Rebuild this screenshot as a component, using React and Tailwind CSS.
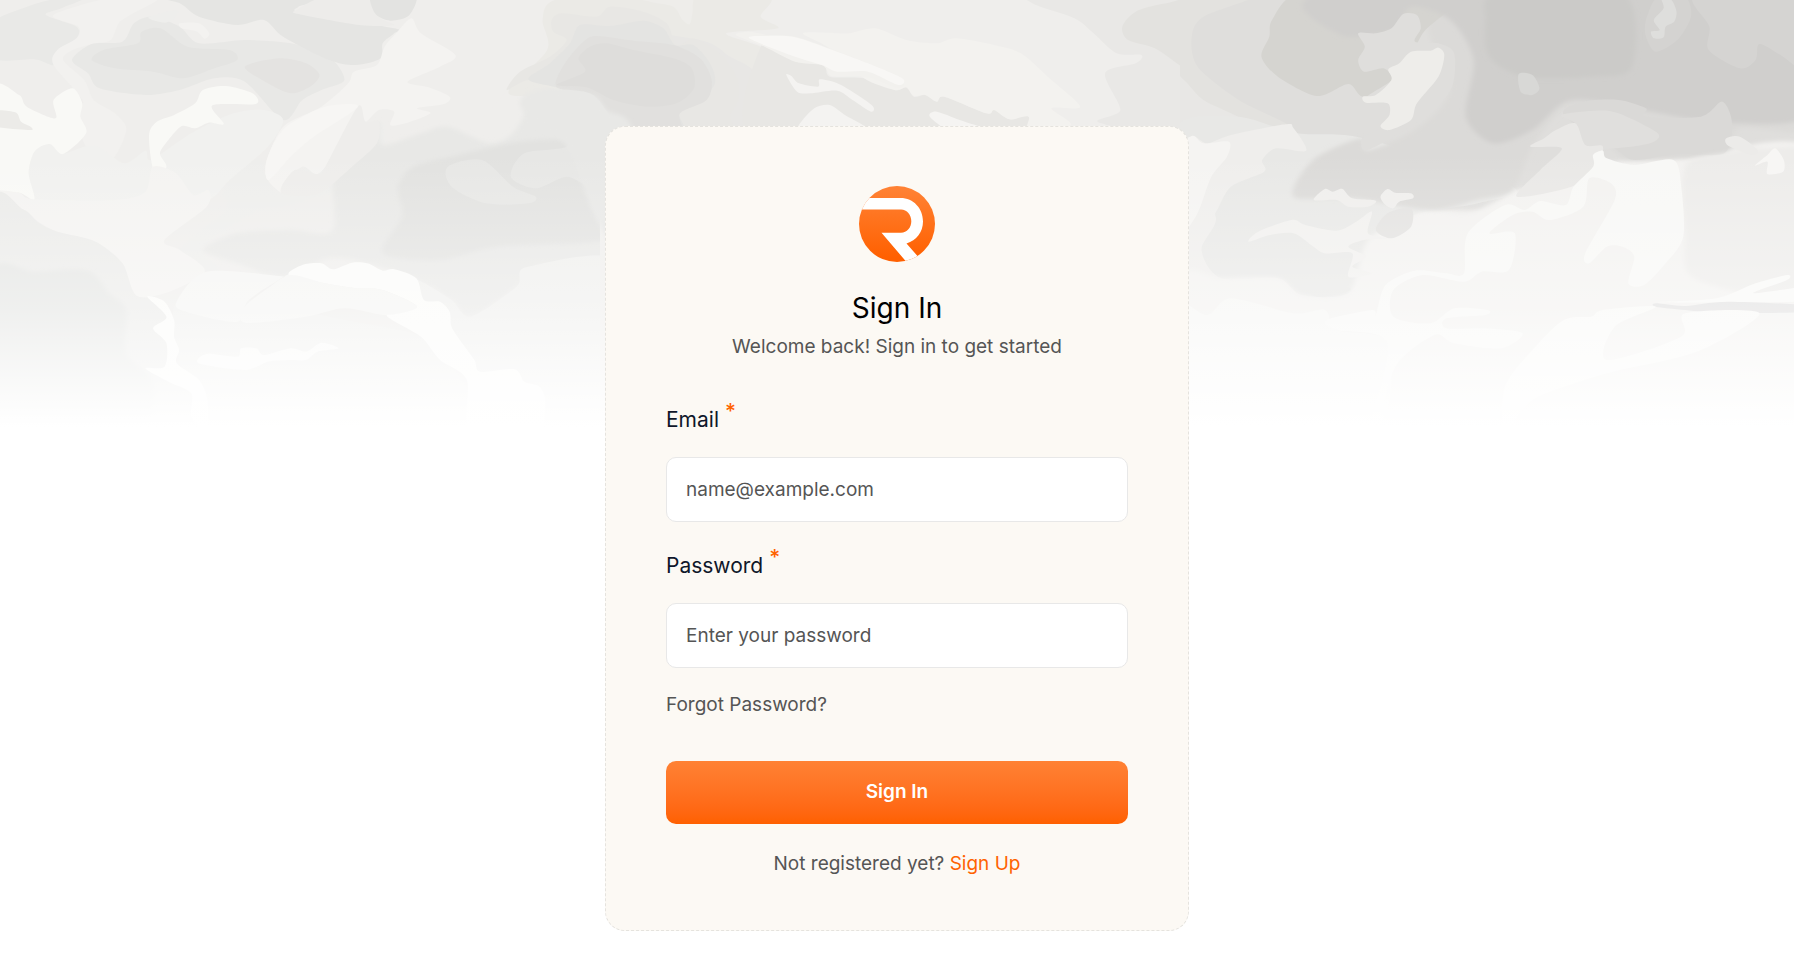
const FONT = "font-['Inter','Liberation_Sans',sans-serif]";

// Each cloud is [colour, outline points, soft edge?]
const WEST = [
  ['#e9e9e7', '-20,70 60,25 130,0 250,-20 160,25 120,45 200,80 200,115 150,150 140,195 90,178 -20,175'],
  ['#f2f1ef', '140,45 300,-10 420,-10 340,45 310,70 290,120 250,130 190,150 165,180 220,240 245,300 300,340 330,390 290,480 225,440 205,350 215,300 140,195 150,150 200,115 205,80'],
  ['#e8e8e6', '188,180 240,132 320,125 350,70 400,50 470,80 520,130 640,120 760,130 860,170 900,240 840,270 790,300 740,360 640,245 560,235 470,270 380,285 260,265 230,220'],
  ['#e4e4e2', '240,180 270,150 360,130 370,95 420,85 490,140 600,150 620,180 560,205 480,235 400,215 300,205'],
  ['#e4e3e1', '640,200 730,175 800,190 835,225 810,260 760,280 700,250'],
  ['#f3f2f0', '470,70 520,70 547,100 535,116 515,95 475,85'],
  ['#eeeeec', '388,52 460,30 460,50 430,68'],
  ['#e5e5e3', '400,-20 840,-10 780,20 790,40 1030,85 1030,100 1000,130 995,175 930,195 860,180 740,110 690,60 620,75 520,50 470,10'],
  ['#edecea', '775,30 850,-10 985,-10 990,50 1030,75 940,75 780,42'],
  ['#efeeec', '1080,60 1085,-20 1450,-20 1415,70 1420,140 1325,270 1250,360 1100,390 1000,420 1065,245'],
  ['#e3e3e1', '973,-20 1085,-20 1070,45 1020,62 980,40'],
  ['#ebeae6', '1450,0 1640,-20 1640,290 1385,290 1330,270 1430,150 1418,60'],
  ['#eeeeec', '585,580 620,500 680,475 700,540 735,580 800,500 880,470 990,365 1000,440 930,550 830,590 760,615 660,640 530,750 640,840 750,830 480,800 470,745 590,630', true],
  ['#e8e8e6', '870,500 950,430 990,365 1000,435 1100,400 1170,380 1280,430 1340,400 1380,330 1440,270 1640,290 1640,760 1500,800 1400,800 1350,860 1230,950 1180,900 1090,840 960,790 860,775 740,830 620,790 530,750 620,700 760,690 870,690', true],
  ['#e2e2e0', '1040,560 1080,500 1180,470 1400,420 1640,450 1640,700 1300,740 1150,780 1000,760 1050,650', true],
  ['#e7e7e5', '1335,530 1370,460 1480,440 1500,380 1640,390 1640,590 1540,560 1480,530 1400,565'],
  ['#e7e7e5', '1170,500 1260,480 1340,560 1400,590 1380,610 1270,610 1180,560'],
  ['#f4f3f1', '1075,55 1100,100 1190,165 1150,200 1065,245 1120,262 1175,290 1160,312 1090,325 1125,340 1060,370 1020,375 1030,335 990,330 955,365 940,320 930,380 880,460 830,522 790,500 740,550 735,578 700,540 695,490 740,380 840,320 910,250 925,215 985,195 1005,140 1035,100'],
  ['#eeedeb', '850,500 935,320 955,365 990,365 985,430 920,500 830,582 735,578 770,510 830,522'],
  ['#f7f6f4', '702,540 695,490 720,420 760,370 850,320 935,320 820,410 760,470'],
  ['#f1f1ef', '75,520 90,455 130,432 165,460 220,440 260,442 325,490 380,452 395,480 500,400 610,340 690,330 740,360 700,440 600,540 545,600 380,670 300,650 90,610'],
  ['#f9f9f6', '-20,265 50,285 70,320 145,355 140,300 190,265 215,310 210,350 225,400 165,462 130,432 90,455 75,520 90,598 50,578 -20,572'],
  ['#ecebe8', '-20,333 40,337 55,365 80,380 78,390 -20,377'],
  ['#f9f9f6', '395,480 390,400 410,365 455,345 510,310 530,270 590,258 660,280 668,312 555,316 585,372 545,368 510,385 475,378 440,420 418,460 435,500 410,537'],
  ['#f4f3f1', '90,598 300,600 380,575 400,500 460,520 505,585 545,570 540,620 430,720 470,750 535,815 430,880 350,885 320,790 265,755 240,720 150,695 100,665 60,628 -20,615 -20,572 50,578'],
  ['#ebebe9', '-20,617 60,628 100,668 150,695 250,725 320,790 355,885 430,905 455,1000 460,1100 540,1200 540,1300 -20,1300'],
  ['#e4e5e3', '-20,820 90,815 230,812 285,880 330,930 330,1060 400,1150 350,1300 -20,1300', true],
  ['#f0f0ee', '455,920 540,880 650,900 900,960 1100,1010 1200,1130 1240,1300 560,1300 540,1180 470,1090'],
  ['#f5f5f3', '750,825 650,900 620,965 500,940 460,910 540,815 750,830'],
  ['#efefed', '1090,840 1180,900 1230,950 1350,860 1380,800 1640,800 1640,1300 1420,1300 1400,1150 1255,1115 1180,980 1108,900'],
  ['#fbfbf9', '755,825 790,795 840,790 870,808 920,788 960,790 1000,812 1030,808 1088,835 1108,900 1150,905 1175,935 1180,980 1205,1025 1240,1080 1255,1115 1345,1108 1370,1145 1410,1160 1425,1210 1400,1300 1230,1300 1220,1140 1150,1080 1100,1010 1010,945 1090,920 1000,870 930,865 850,850'],
  ['#f5f5f3', '760,825 850,850 930,865 1000,870 1090,920 1010,945 900,925 800,950 640,968 640,920 700,865'],
  ['#fbfbf9', '385,890 430,905 455,960 455,1010 468,1050 462,1090 520,1140 542,1200 540,1290 500,1250 500,1180 440,1145 380,1105 430,1100 435,1030 400,985 435,950'],
  ['#f9f9f8', '630,1045 670,1045 690,1065 760,1045 800,1055 840,1028 885,1045 830,1055 800,1080 760,1080 700,1085 640,1110 520,1090 540,1062 620,1070'],
];

const MIDDLE = [
  ['#ebeae6', '-60,-20 420,-20 420,50 465,85 330,100 420,140 600,230 600,420 -60,420'],
  ['#e8e7e5', '250,118 340,170 400,210 420,280 420,450 -60,450 -60,100'],
  ['#e9e8e6', '1130,10 1150,-20 1640,-20 1640,420 1310,370 1360,330 1320,220 1400,190 1415,165 1350,160 1290,100 1240,55'],
  ['#e3e2df', '1365,80 1400,35 1480,10 1640,-10 1640,290 1520,200 1450,145 1380,120'],
  ['#e8e7e4', '420,140 510,185 585,195 600,230 690,235 770,270 800,262 820,290 850,285 880,305 900,290 1010,340 1030,330 1070,358 1120,350 1130,450 420,450'],
  ['#f3f2ef', '530,100 600,98 650,100 720,85 800,120 880,130 930,115 1030,135 1100,160 1170,230 1255,320 1180,325 1230,375 1120,395 1120,350 1070,358 1030,330 1010,340 900,290 880,305 850,285 820,288 800,262 770,270 690,235 600,145'],
  ['#f2f1ee', '355,105 390,95 440,105 510,110 600,145 700,190 790,235 780,265 700,232 620,230 600,225 580,195 510,185 430,140'],
  ['#f8f7f5', '390,115 440,108 510,112 600,147 700,190 790,235 780,255 700,215 620,215 580,195 510,170'],
  ['#f4f3f1', '487,225 500,228 520,250 570,260 575,238 630,255 710,315 708,335 660,300 620,272 550,280 515,275'],
  ['#f4f3f1', '520,375 560,325 600,315 640,345 700,395 520,400'],
  ['#f5f4f2', '862,350 880,335 940,360 1010,390 920,395'],
];

// Dark bank that sits across the west and middle parts
const BANK = [
  ['#eeedea', '360,-20 560,-20 578,20 570,72 548,60 520,20 450,5'],
  ['#e8e7e4', '155,60 185,40 290,50 330,20 430,35 500,70 530,135 585,116 660,160 710,230 715,300 690,350 700,420 420,420 280,285 170,262 85,240 20,270 60,215 150,170 200,120 160,95'],
  ['#e4e4e2', '240,75 330,78 430,62 490,85 525,135 580,135 630,190 645,250 600,300 530,325 550,400 380,400 280,285 170,262 85,238 150,190 210,130'],
  ['#e1e0de', '195,190 250,125 290,108 400,122 520,135 600,175 635,240 620,300 540,340 540,400 380,400 280,285 170,262'],
  ['#dedddb', '235,175 270,140 320,130 400,150 520,175 575,205 582,265 530,310 440,320 340,300 260,262 170,255 255,215'],
  ['#e8e8e6', '60,300 130,268 280,288 320,330 400,400 400,800 290,660 200,440 90,360', true],
];

const EAST = [
  ['#dfdedc', '-60,-20 1640,-20 1640,600 300,600 150,450 -60,400', true],
  ['#e3e2df', '-60,-20 200,-20 60,50 30,110 45,200 150,300 290,400 -60,420'],
  ['#e8e7e5', '-60,180 10,240 60,300 155,355 200,410 -60,440'],
  ['#e8e8e6', '0,370 150,350 300,400 470,415 850,560 760,610 590,650 500,760 430,880 310,885 250,835 105,835 55,750 92,655 40,550'],
  ['#f3f2f0', '590,650 640,630 740,640 860,570 920,570 1030,500 1300,470 1640,480 1640,1300 0,1300 0,840 105,835 250,835 310,885 430,880 480,720', true],
  ['#dbdad8', '690,0 1640,-20 1640,370 1430,385 1390,460 1160,480 1100,440 1030,380 980,330 900,440 850,570 760,600 640,630 440,595 290,590 340,480 460,415 480,450 600,390 690,270', true],
  ['#d5d4d0', '300,-20 235,60 228,110 208,170 250,230 350,288 430,252 470,290 560,240 620,100 700,0 500,-20'],
  ['#d0cfcd', '390,-20 1640,-20 1640,330 1400,370 1180,330 1000,300 900,390 800,430 730,350 750,180 690,60 590,20 545,90 410,105', true],
  ['#cbcac8', '780,60 810,-20 1130,-20 1155,200 1050,230 880,230 790,170', true],
  ['#d5d4d2', '1320,-20 1640,-20 1640,240 1540,170 1480,132 1470,180 1430,205 1350,150 1352,80'],
  ['#dad9d7', '980,345 1030,305 1120,300 1190,325 1190,350 1330,350 1385,305 1410,370 1390,460 1270,462 1160,480 1110,445'],
  ['#d4d3d1', '1190,110 1190,60 1220,-10 1290,-10 1305,50 1270,120 1215,155'],
  ['#dededc', '1228,-10 1255,0 1268,35 1262,65 1240,80 1235,112 1210,115 1203,95 1225,90 1210,60 1235,25'],
  ['#d8d8d6', '865,222 900,225 918,265 900,285 870,275'],
  ['#dfdedc', '455,100 500,100 540,85 570,42 605,45 615,85 600,125 660,130 700,160 695,260 640,340 560,400 475,452 465,415 515,380 535,330 470,300 540,240 520,205 470,215 455,180 472,140'],
  ['#eeedea', '660,143 675,165 660,230 605,310 590,360 535,390 512,378 535,345 530,310 475,308 467,290 500,285 540,240 532,208 560,190 590,155 640,152'],
  ['#e0dfdd', '975,345 1060,332 1120,340 1220,400 1200,430 1110,445 1035,440 1015,375'],
  ['#e9e8e6', '895,440 930,415 960,390 1010,370 1035,435 1080,440 1060,510 1000,560 860,590 920,510 975,445'],
  ['#efeeec', '130,405 270,373 290,385 322,452 245,445 210,480 215,515 130,560 90,640 60,680 -20,700 -20,470 30,410 70,430'],
  ['#f5f4f2', '-20,470 30,408 60,430 125,425 120,470 80,530 40,650 -20,720'],
  ['#efeeec', '342,600 370,567 390,575 415,567 440,595 500,602 480,620 430,620 400,600'],
  ['#efeeec', '512,590 530,567 550,578 590,580 595,595 560,605 545,625 525,615'],
  ['#e3e2e0', '500,690 530,640 590,625 590,680 540,715'],
  ['#f1f0ee', '175,725 200,695 285,660 320,675 400,692 450,665 490,635 480,700 530,715 470,720 430,740 475,770 440,800 490,820 430,830 440,760 370,760 335,735 290,700 230,705'],
  ['#e8e8e6', '310,850 340,800 385,770 440,765 400,830 435,870 350,890'],
  ['#f6f6f4', '-20,920 70,945 130,895 290,940 370,930 400,990 530,1030 480,1300 -20,1300'],
  ['#edecea', '1290,500 1390,460 1480,445 1640,480 1640,880 1320,840 1290,700', true],
  ['#f8f8f6', '500,945 525,855 600,812 680,820 725,820 735,700 830,615 880,630 920,603 985,615 1005,560 1055,500 1055,465 1080,452 1090,475 1160,495 1260,480 1280,560 1285,710 1240,790 1185,855 1145,850 1160,770 1130,740 1090,740 1045,790 1035,760 1110,600 1100,550 1045,535 1030,620 945,660 900,635 850,645 790,700 855,700 840,810 770,815 725,845 620,825 545,870 545,950 640,970 700,925 785,930 780,945 680,955 680,985 780,985 875,1000 820,1045 700,1030 650,1005 550,1100 500,1300 480,1300 530,1030 400,990 375,960 490,930'],
  ['#ecebe9', '1395,415 1430,410 1475,450 1460,465 1400,437'],
  ['#f7f6f4', '1468,497 1500,465 1520,445 1542,480 1540,515 1500,522 1500,485'],
  ['#f9f9f7', '1220,907 1370,895 1470,850 1550,825 1550,840 1465,880 1640,855 1640,900 1400,907'],
  ['#e1e0e0', '1215,910 1290,918 1400,905 1640,918 1640,934 1400,940 1290,930 1215,920'],
  ['#f9f9f7', '1080,930 1215,920 1110,980 1090,1080 1280,1010 1290,940 1480,940 1320,1055 1090,1120 900,1200 830,1300 830,1160 900,1050 980,960 1050,950'],
];

// Closed Catmull-Rom curve through the points
function outline(points) {
  const p = points.split(' ').map((s) => s.split(',').map(Number));
  const n = p.length;
  let d = `M${p[0][0]} ${p[0][1]}`;
  for (let i = 0; i < n; i++) {
    const a = p[(i + n - 1) % n];
    const b = p[i];
    const c = p[(i + 1) % n];
    const e = p[(i + 2) % n];
    d += `C${b[0] + (c[0] - a[0]) / 7} ${b[1] + (c[1] - a[1]) / 7} ${c[0] - (e[0] - b[0]) / 7} ${c[1] - (e[1] - b[1]) / 7} ${c[0]} ${c[1]}`;
  }
  return d + 'Z';
}

function Clouds({ shapes, transform, clip }) {
  return (
    <g clipPath={clip}>
      <g transform={transform}>
        {shapes.map(([fill, points, soft], i) => (
          <path key={i} d={outline(points)} fill={fill} filter={soft ? 'url(#soft)' : undefined} />
        ))}
      </g>
    </g>
  );
}

function Sky() {
  return (
    <svg
      className="absolute inset-x-0 top-0 h-[440px] w-full"
      viewBox="0 0 1794 440"
      preserveAspectRatio="xMidYMin slice"
      aria-hidden="true"
    >
      <defs>
        <filter id="soft" x="-10%" y="-10%" width="120%" height="120%">
          <feGaussianBlur stdDeviation="7" />
        </filter>
        <clipPath id="west">
          <rect width="600" height="440" />
        </clipPath>
        <clipPath id="middle">
          <rect x="600" width="580" height="440" />
        </clipPath>
        <clipPath id="east">
          <rect x="1180" width="614" height="440" />
        </clipPath>
        <linearGradient id="fade" x1="0" y1="0" x2="0" y2="1">
          <stop offset="0.35" stopColor="#fff" stopOpacity="0" />
          <stop offset="0.7" stopColor="#fff" stopOpacity="0.42" />
          <stop offset="0.97" stopColor="#fff" stopOpacity="1" />
        </linearGradient>
      </defs>
      <rect width="1794" height="440" fill="#efeeec" />
      <Clouds shapes={WEST} clip="url(#west)" transform="scale(.38265 .33333)" />
      <Clouds shapes={MIDDLE} clip="url(#middle)" transform="translate(600 0) scale(.38265 .33333)" />
      <Clouds shapes={BANK} transform="translate(500 0) scale(.33333)" />
      <Clouds shapes={EAST} clip="url(#east)" transform="translate(1180 0) scale(.39158 .33333)" />
      <rect width="1794" height="440" fill="url(#fade)" />
    </svg>
  );
}

function Logo() {
  return (
    <svg className="size-[76px]" viewBox="0 0 76 76" role="img" aria-label="Logo">
      <defs>
        <linearGradient id="brand" x1="0" y1="0" x2="0" y2="1">
          <stop offset="0.05" stopColor="#ff8133" />
          <stop offset="0.95" stopColor="#ff6000" />
        </linearGradient>
        <clipPath id="disc">
          <circle cx="38" cy="38" r="38" />
        </clipPath>
      </defs>
      <circle cx="38" cy="38" r="38" fill="url(#brand)" />
      <path
        clipPath="url(#disc)"
        fill="#fff"
        d="M0 12H41.500C54.500 12 64 22.500 64 35.500C64 46 57.500 54.500 47.500 57.500L62 74L50 79L22.500 46.700H42C48 46.700 52.300 41.500 52.300 35.200C52.300 29 48 23.500 42 23.500H0Z"
      />
    </svg>
  );
}

function Field({ id, label, type, placeholder }) {
  return (
    <div className="flex flex-col gap-[21px]">
      <label htmlFor={id} className="flex gap-1.5 text-[21px] leading-8 text-[#0f172a]">
        {label}
        <span className="text-[21px] leading-4 font-medium text-[#ff6200]">*</span>
      </label>
      <input
        id={id}
        type={type}
        required
        placeholder={placeholder}
        className="h-[65px] w-full rounded-[10px] border border-[#e8e8e8] bg-white px-[19px] text-[19px] text-[#555] outline-none placeholder:text-[#555] focus:border-[#ff8133]"
      />
    </div>
  );
}

export default function App() {
  return (
    <div className={`relative flex min-h-screen justify-center bg-white px-4 pt-[126px] pb-7 ${FONT}`}>
      <Sky />
      <main className="relative w-full max-w-[584px] self-start rounded-[20px] border border-dashed border-[#e5e3de] bg-[#fcf9f4] px-5 pt-[59px] pb-[52px] sm:px-[60px]">
        <header className="flex flex-col items-center text-center">
          <Logo />
          <h1 className="mt-7 text-[28px] leading-9 text-black">Sign In</h1>
          <p className="mt-[7px] text-[19px] leading-7 text-[#555]">Welcome back! Sign in to get started</p>
        </header>
        <form className="mt-[43px] flex flex-col" onSubmit={(e) => e.preventDefault()}>
          <div className="flex flex-col gap-7">
            <Field id="email" label="Email" type="email" placeholder="name@example.com" />
            <Field id="password" label="Password" type="password" placeholder="Enter your password" />
          </div>
          <a href="#forgot" className="mt-[23px] self-start text-[19px] leading-7 text-[#555]">
            Forgot Password?
          </a>
          <button
            type="submit"
            className="mt-[42px] h-[63px] rounded-[10px] bg-linear-to-b from-[#ff8133] to-[#ff6000] text-[19px] font-semibold text-white"
          >
            Sign In
          </button>
        </form>
        <p className="mt-[26px] text-center text-[19px] leading-7 text-[#555]">
          Not registered yet?{' '}
          <a href="#signup" className="text-[#ff6200]">
            Sign Up
          </a>
        </p>
      </main>
    </div>
  );
}
